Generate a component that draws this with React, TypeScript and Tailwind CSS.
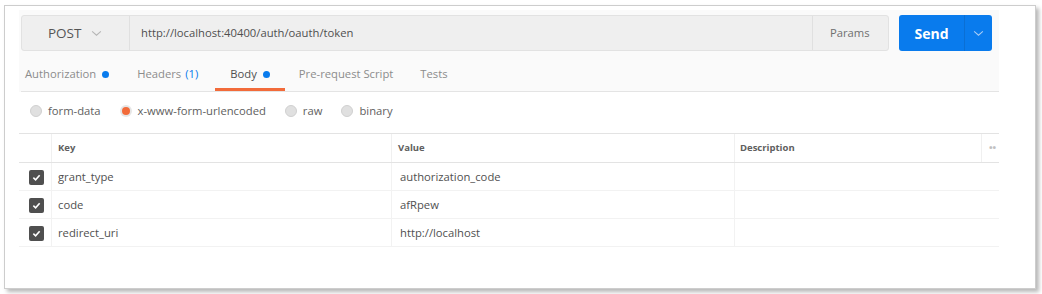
import React from "react";

const Chevron = ({ className }: { className?: string }) => (
  <svg viewBox="0 0 12 8" className={className} fill="none" stroke="currentColor" strokeWidth="1.2">
    <path d="M1 1.5 L6 6 L11 1.5" />
  </svg>
);

const Dot = () => <span className="ml-[6px] inline-block h-[7px] w-[7px] rounded-full bg-[#097bed]" />;

const Radio = ({ label, on }: { label: string; on?: boolean }) => (
  <div className="flex items-center">
    {on ? (
      <span className="flex h-[12px] w-[12px] items-center justify-center rounded-full bg-[#e6e6e6]">
        <span className="h-[8px] w-[8px] rounded-full bg-[#f26b3a]" />
      </span>
    ) : (
      <span className="h-[12px] w-[12px] rounded-full border border-[#d0d0d0] bg-[#e0e0e0]" />
    )}
    <span className="ml-[6px]">{label}</span>
  </div>
);

const Check = () => (
  <span className="flex h-[15px] w-[15px] items-center justify-center rounded-[2px] bg-[#4f4f4f]">
    <svg viewBox="0 0 10 10" className="h-[9px] w-[9px]" fill="none" stroke="white" strokeWidth="1.8">
      <path d="M1.5 5.2 L4 7.5 L8.5 2.5" />
    </svg>
  </span>
);

const rows = [
  ["grant_type", "authorization_code"],
  ["code", "afRpew"],
  ["redirect_uri", "http://localhost"],
];

export default function App() {
  return (
    <div className="h-[294px] w-[1042px] bg-white pl-[4px] pt-[5px] font-['Open_Sans',sans-serif] text-[11.25px] text-[#505050]">
      <div className="h-[284px] w-[1032px] border border-[#cdcdcd] bg-white pl-[14px] pt-[4px] shadow-[3px_3px_4px_rgba(0,0,0,0.28)]">
        <div className="w-[980px] bg-[#fafafa] pl-[2px] pt-[5px]">
          <div className="flex h-[36px]">
            <div className="flex w-[868px] rounded-[3px] border border-[#e2e2e2] bg-[#efefef]">
              <div className="flex w-[108px] items-center border-r border-[#e0e0e0] pl-[26px] text-[13.5px] text-[#555]">
                POST
                <Chevron className="ml-[10px] h-[7px] w-[11px] text-[#b5b5b5]" />
              </div>
              <div className="flex flex-1 items-center pl-[11px] text-[#505050]">http://localhost:40400/auth/oauth/token</div>
              <div className="flex w-[76px] items-center border-l border-[#e0e0e0] pl-[17px] text-[#707070]">Params</div>
            </div>
            <div className="ml-[10px] flex w-[93px] rounded-[3px] bg-[#097bed] text-white">
              <div className="flex w-[65px] items-center justify-center text-[14px] font-bold">Send</div>
              <div className="flex flex-1 items-center justify-center border-l border-[#0a6fd4]">
                <Chevron className="h-[7px] w-[11px] text-[#a9cdf5]" />
              </div>
            </div>
          </div>
          <div className="flex h-[41px] items-stretch border-b border-[#e4e4e4] text-[#8c8c8c]">
            <div className="flex items-center pl-[4px] pr-[28px] pt-[7px]">
              Authorization
              <Dot />
            </div>
            <div className="flex items-center pr-[17px] pt-[7px]">
              Headers <span className="ml-[4px] text-[#097bed]">(1)</span>
            </div>
            <div className="flex items-center border-b-[3px] border-[#f26b3a] px-[15px] pt-[10px] text-[#505050]">
              Body
              <Dot />
            </div>
            <div className="flex items-center pl-[14px] pr-[27px] pt-[7px]">Pre-request Script</div>
            <div className="flex items-center pt-[7px]">Tests</div>
          </div>
        </div>
        <div className="flex h-[41px] items-center gap-[19px] pb-[3px] pl-[11px] text-[#606060]">
          <Radio label="form-data" />
          <Radio label="x-www-form-urlencoded" on />
          <Radio label="raw" />
          <Radio label="binary" />
        </div>
        <div className="w-[980px]">
          <div className="flex h-[30px] border-y border-[#e3e3e3] text-[9.5px] font-bold text-[#606060]">
            <div className="w-[32px]" />
            <div className="flex w-[340px] items-center border-l border-[#f0f0f0] pl-[6px]">Key</div>
            <div className="flex w-[343px] items-center border-l border-[#f0f0f0] pl-[6px]">Value</div>
            <div className="flex w-[247px] items-center border-l border-[#f0f0f0] pl-[5px]">Description</div>
            <div className="flex flex-1 items-center justify-center border-l border-[#f0f0f0] pl-[4px] text-[#c0c0c0]">••</div>
          </div>
          {rows.map(([k, v]) => (
            <div key={k} className="flex h-[28px] border-b border-[#f2f2f2]">
              <div className="flex w-[32px] items-center justify-center pl-[3px] pt-[1px]">
                <Check />
              </div>
              <div className="flex w-[340px] items-center border-l border-[#f2f2f2] pl-[6px] pt-[1px]">{k}</div>
              <div className="flex w-[343px] items-center border-l border-[#f2f2f2] pl-[8px] pt-[1px]">{v}</div>
              <div className="w-[247px] border-l border-[#f2f2f2]" />
            </div>
          ))}
        </div>
      </div>
    </div>
  );
}
